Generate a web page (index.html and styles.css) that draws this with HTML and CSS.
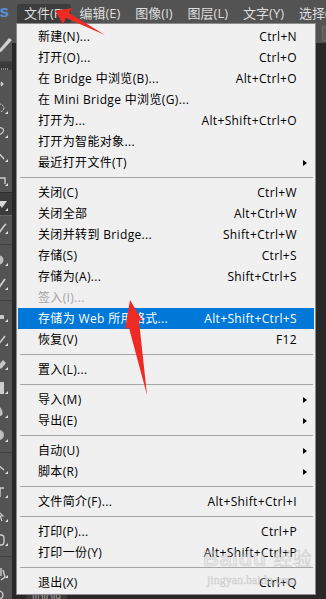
FILE: index.html
```html
<!DOCTYPE html>
<html lang="zh-CN">
<head>
    <meta charset="UTF-8">
    <meta name="viewport" content="width=device-width, initial-scale=1.0">
    <title>文件菜单</title>
    <link rel="stylesheet" href="styles.css">
</head>
<body>
    <div class="app">
        <header class="menubar">
            <span class="logo"><span>Ps</span></span>
            <nav class="menus">
                <span class="menu active">文件(F)</span>
                <span class="menu">编辑(E)</span>
                <span class="menu">图像(I)</span>
                <span class="menu">图层(L)</span>
                <span class="menu">文字(Y)</span>
                <span class="menu">选择(S)</span>
            </nav>
        </header>

        <div class="workspace">
            <aside class="tools">
                <div class="tool-options">
                    <svg width="12" height="39" viewBox="0 0 12 39"><path d="M-2 28 L9 15 L12 17 L1 29 Z" fill="#d0d0d0"/><path d="M-2 28 L1 29 L-3 31 Z" fill="#9a9a9a"/></svg>
                </div>
                <div class="tools-head"><span class="grip"></span></div>
                <div class="tool-list">
                    <div class="tool"><svg viewBox="0 0 12 24"><path d="M-4 12 H3 M1 10 L3 12 L1 14 M-1 8 V16" stroke="#cfcfcf" stroke-width="1.2" fill="none"/></svg></div>
                    <div class="tool"><svg viewBox="0 0 12 24"><ellipse cx="-1" cy="12" rx="5" ry="4" stroke="#cfcfcf" stroke-dasharray="2 1" fill="none"/><path d="M5 18 H8 V15 Z" fill="#e0e0e0"/></svg></div>
                    <div class="tool"><svg viewBox="0 0 12 24"><path d="M-3 9 C1 6 5 9 3 12 C1 15 -2 14 -2 17" stroke="#cfcfcf" stroke-width="1.2" fill="none"/><path d="M5 18 H8 V15 Z" fill="#e0e0e0"/></svg></div>
                    <div class="tool"><svg viewBox="0 0 12 24"><path d="M-2 8 L4 15" stroke="#cfcfcf" stroke-width="1.4"/><path d="M5 18 H8 V15 Z" fill="#e0e0e0"/></svg></div>
                    <div class="tool"><svg viewBox="0 0 12 24"><path d="M-2 10 H5 V16" stroke="#cfcfcf" stroke-width="1.4" fill="none"/><path d="M5 18 H8 V15 Z" fill="#e0e0e0"/></svg></div>
                    <div class="tool current"><svg viewBox="0 0 12 24"><path d="M-3 8 H7 L2 15 Z" fill="#d8d8d8"/><path d="M5 18 H8 V15 Z" fill="#e0e0e0"/></svg></div>
                    <div class="tool"><svg viewBox="0 0 12 24"><path d="M-1 17 L4 10 L6 8" stroke="#cfcfcf" stroke-width="1.6"/><path d="M5 18 H8 V15 Z" fill="#e0e0e0"/></svg></div>
                    <div class="tool-sep"></div>
                    <div class="tool"><svg viewBox="0 0 12 24"><circle cx="-1" cy="12" r="4.5" fill="#bdbdbd"/><path d="M5 18 H8 V15 Z" fill="#e0e0e0"/></svg></div>
                    <div class="tool"><svg viewBox="0 0 12 24"><path d="M-2 17 L5 7" stroke="#cfcfcf" stroke-width="1.8"/><path d="M5 18 H8 V15 Z" fill="#e0e0e0"/></svg></div>
                    <div class="tool-sep"></div>
                    <div class="tool"><svg viewBox="0 0 12 24"><path d="M-4 15 H4 V11 H-4 Z" fill="#c8c8c8"/><path d="M5 18 H8 V15 Z" fill="#e0e0e0"/></svg></div>
                    <div class="tool"><svg viewBox="0 0 12 24"><path d="M-2 17 L5 8" stroke="#cfcfcf" stroke-width="1.6"/><path d="M5 18 H8 V15 Z" fill="#e0e0e0"/></svg></div>
                    <div class="tool"><svg viewBox="0 0 12 24"><path d="M-2 14 L3 8 L6 11 L1 17 Z" fill="#c8c8c8"/><path d="M5 18 H8 V15 Z" fill="#e0e0e0"/></svg></div>
                    <div class="tool"><svg viewBox="0 0 12 24"><rect x="-4" y="6" width="8" height="12" fill="#cdcdcd"/><path d="M5 18 H8 V15 Z" fill="#e0e0e0"/></svg></div>
                    <div class="tool"><svg viewBox="0 0 12 24"><path d="M0 7 C4 12 3 16 0 16 C-3 16 -4 12 0 7 Z" fill="#c0c0c0"/><path d="M5 18 H8 V15 Z" fill="#e0e0e0"/></svg></div>
                    <div class="tool"><svg viewBox="0 0 12 24"><circle cx="-1" cy="11" r="5" fill="#bebebe"/><path d="M5 18 H8 V15 Z" fill="#e0e0e0"/></svg></div>
                    <div class="tool-sep"></div>
                    <div class="tool"><svg viewBox="0 0 12 24"><path d="M-3 8 L4 14" stroke="#cfcfcf" stroke-width="1.4"/><path d="M5 18 H8 V15 Z" fill="#e0e0e0"/></svg></div>
                    <div class="tool"><svg viewBox="0 0 12 24"><path d="M-4 8 H4 M0 8 V17" stroke="#cfcfcf" stroke-width="1.4"/><path d="M5 18 H8 V15 Z" fill="#e0e0e0"/></svg></div>
                    <div class="tool"><svg viewBox="0 0 12 24"><path d="M-3 6 L3 12 L0 12 L2 17" stroke="#cfcfcf" stroke-width="1.2" fill="none"/><path d="M5 18 H8 V15 Z" fill="#e0e0e0"/></svg></div>
                    <div class="tool"><svg viewBox="0 0 12 24"><rect x="-5" y="7" width="9" height="10" rx="3" stroke="#cfcfcf" stroke-width="1.3" fill="none"/><path d="M5 18 H8 V15 Z" fill="#e0e0e0"/></svg></div>
                    <div class="tool-sep"></div>
                    <div class="tool"><svg viewBox="0 0 12 24"><path d="M-3 18 L-1 8 M1 8 V16 M3 10 L5 17 L1 20" stroke="#cfcfcf" stroke-width="1.4" fill="none"/><path d="M5 18 H8 V15 Z" fill="#e0e0e0"/></svg></div>
                    <div class="tool"><svg viewBox="0 0 12 24"><circle cx="-1" cy="11" r="4" stroke="#cfcfcf" stroke-width="1.3" fill="none"/></svg></div>
                </div>
            </aside>
            <main class="canvas">
                <div class="canvas-options"><span class="opt-box"></span></div>
                <div class="canvas-area">
                    <span class="doc-label">IIDIOI9</span>
                </div>
            </main>
        </div>

        <div class="dropdown">
            <div class="item"><span>新建(N)...</span><span class="key">Ctrl+N</span></div>
            <div class="item"><span>打开(O)...</span><span class="key">Ctrl+O</span></div>
            <div class="item"><span>在 Bridge 中浏览(B)...</span><span class="key">Alt+Ctrl+O</span></div>
            <div class="item"><span>在 Mini Bridge 中浏览(G)...</span><span class="key"></span></div>
            <div class="item"><span>打开为...</span><span class="key">Alt+Shift+Ctrl+O</span></div>
            <div class="item"><span>打开为智能对象...</span><span class="key"></span></div>
            <div class="item sub"><span>最近打开文件(T)</span><span class="key"></span><span class="more"></span></div>
            <div class="sep"></div>
            <div class="item"><span>关闭(C)</span><span class="key">Ctrl+W</span></div>
            <div class="item"><span>关闭全部</span><span class="key">Alt+Ctrl+W</span></div>
            <div class="item"><span>关闭并转到 Bridge...</span><span class="key">Shift+Ctrl+W</span></div>
            <div class="item"><span>存储(S)</span><span class="key">Ctrl+S</span></div>
            <div class="item"><span>存储为(A)...</span><span class="key">Shift+Ctrl+S</span></div>
            <div class="item disabled"><span>签入(I)...</span><span class="key"></span></div>
            <div class="item selected"><span>存储为 Web 所用格式...</span><span class="key">Alt+Shift+Ctrl+S</span></div>
            <div class="item"><span>恢复(V)</span><span class="key">F12</span></div>
            <div class="sep"></div>
            <div class="item"><span>置入(L)...</span><span class="key"></span></div>
            <div class="sep"></div>
            <div class="item sub"><span>导入(M)</span><span class="key"></span><span class="more"></span></div>
            <div class="item sub"><span>导出(E)</span><span class="key"></span><span class="more"></span></div>
            <div class="sep"></div>
            <div class="item sub"><span>自动(U)</span><span class="key"></span><span class="more"></span></div>
            <div class="item sub"><span>脚本(R)</span><span class="key"></span><span class="more"></span></div>
            <div class="sep"></div>
            <div class="item"><span>文件简介(F)...</span><span class="key">Alt+Shift+Ctrl+I</span></div>
            <div class="sep"></div>
            <div class="item"><span>打印(P)...</span><span class="key">Ctrl+P</span></div>
            <div class="item"><span>打印一份(Y)</span><span class="key">Alt+Shift+Ctrl+P</span></div>
            <div class="sep"></div>
            <div class="item"><span>退出(X)</span><span class="key">Ctrl+Q</span></div>
        </div>

        <div class="watermark">
            <div class="wm-logo">Bai<span class="paw">du</span> <span class="wm-cn">经验</span></div>
            <div class="wm-url">jingyan.baidu.com</div>
        </div>

        <svg class="arrows" width="326" height="599" viewBox="0 0 326 599">
            <polygon points="55,11 72,8 69,13 105,35 66,18 63,24" fill="#ee2a24"/>
            <polygon points="130,300 142,320 139,321 147,395 129,328 125,329" fill="#ee2a24"/>
        </svg>
    </div>
</body>
</html>
```

FILE: styles.css
```css
* {
    margin: 0;
    padding: 0;
    box-sizing: border-box;
}

body {
    width: 326px;
    height: 599px;
    overflow: hidden;
    background-color: #282828;
    font-family: "Open Sans", "Noto Sans CJK SC", sans-serif;
}

.app {
    position: relative;
    width: 326px;
    height: 599px;
    display: flex;
    flex-direction: column;
}

/* top menu bar */

.menubar {
    height: 23px;
    background-color: #535353;
    display: flex;
    align-items: flex-end;
    flex-shrink: 0;
    overflow: hidden;
}

.logo {
    width: 10px;
    height: 23px;
    flex-shrink: 0;
    overflow: hidden;
    display: flex;
    justify-content: flex-end;
    align-items: center;
}

.logo span {
    font-family: "Liberation Sans", sans-serif;
    font-weight: bold;
    font-size: 17px;
    color: #5a94d6;
    margin-right: 1px;
}

.menus {
    display: flex;
    flex-shrink: 0;
    margin-left: 7px;
    white-space: nowrap;
}

.menu {
    height: 19px;
    line-height: 19px;
    padding: 0 7px;
    margin-right: 1px;
    font-size: 13px;
    color: #dedede;
    border-radius: 2px 2px 0 0;
}

.menu.active {
    background-color: #3d3d3d;
}

/* workspace under the menu */

.workspace {
    flex: 1;
    display: flex;
    min-height: 0;
}

.tools {
    width: 12px;
    display: flex;
    flex-direction: column;
    background-color: #535353;
}

.tool-options {
    height: 39px;
    border-bottom: 1px solid #454545;
}

.tool-options svg {
    display: block;
}

.tools-head {
    height: 10px;
    background-color: #3b3b3b;
}

.grip {
    display: block;
    margin: 6px 0 0 1px;
    width: 8px;
    height: 2px;
    background-image: linear-gradient(90deg, #8a8a8a 1px, transparent 1px);
    background-size: 2px 2px;
}

.tool-list {
    padding-top: 2px;
}

.tool {
    height: 24px;
}

.tool svg {
    display: block;
    width: 12px;
    height: 24px;
}

.tool.current {
    background-color: #3c3c3c;
    border-top: 1px solid #2e2e2e;
    border-bottom: 1px solid #666;
}

.tool-sep {
    height: 4px;
    margin-top: 4px;
    border-top: 1px solid #3f3f3f;
}

.canvas {
    flex: 1;
    display: flex;
    flex-direction: column;
}

.canvas-options {
    height: 20px;
    background-color: #535353;
    display: flex;
    justify-content: flex-end;
    align-items: center;
}

.opt-box {
    width: 4px;
    height: 15px;
    border: 1px solid #6a6a6a;
    border-right: none;
    background-color: #5d5d5d;
}

.canvas-area {
    flex: 1;
    background-color: #282828;
    display: flex;
    align-items: flex-end;
}

.doc-label {
    margin-left: 14px;
    background-color: #3a3a3a;
    color: #b8b8b8;
    font-size: 9px;
    line-height: 6px;
    height: 4px;
    padding: 0 6px;
    overflow: hidden;
}

/* the open File menu */

.dropdown {
    position: absolute;
    top: 23px;
    left: 16px;
    width: 300px;
    padding: 2px 0 1px;
    background-color: #f0f0f0;
    border: 1px solid #8c8c8c;
    font-size: 12px;
    letter-spacing: 0.35px;
    color: #000;
}

.item {
    display: grid;
    grid-template-columns: 1fr auto 17px;
    align-items: center;
    height: 21px;
    line-height: 21px;
    margin: 0 1px;
    padding-left: 20px;
    white-space: nowrap;
}

.item.selected {
    background-color: #0078d7;
    color: #fff;
}

.item.disabled {
    color: #a3a3a3;
}

.more {
    width: 0;
    height: 0;
    margin-left: 6px;
    border-top: 3.5px solid transparent;
    border-bottom: 3.5px solid transparent;
    border-left: 4px solid #000;
}

.sep {
    height: 9px;
    padding-top: 4px;
    margin: 0 2px 0 3px;
}

.sep::before {
    content: "";
    display: block;
    height: 1px;
    background-color: #a6a6a6;
}

/* overlays */

.watermark {
    position: absolute;
    left: 203px;
    top: 546px;
    color: rgba(210, 210, 210, 0.4);
    -webkit-text-stroke: 0.6px rgba(180, 180, 180, 0.45);
    pointer-events: none;
}

.wm-logo {
    font-family: "Liberation Sans", "Noto Sans CJK SC", sans-serif;
    font-weight: bold;
    font-size: 22px;
    line-height: 26px;
    letter-spacing: 0.5px;
}

.wm-cn {
    font-size: 19px;
    font-weight: normal;
}

.wm-url {
    font-family: "Liberation Serif", serif;
    font-size: 12px;
    line-height: 14px;
    margin-left: 4px;
}

.arrows {
    position: absolute;
    top: 0;
    left: 0;
    pointer-events: none;
}
```
